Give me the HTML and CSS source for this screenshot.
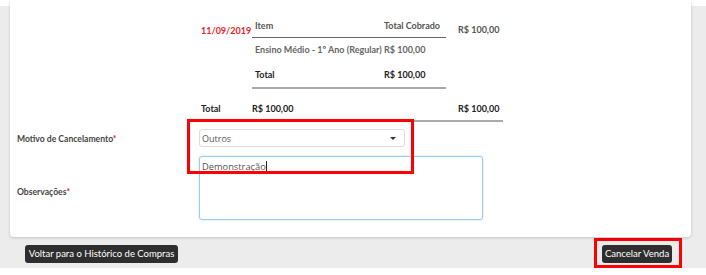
FILE: index.html
```html
<!DOCTYPE html>
<html lang="pt-BR">
<head>
<meta charset="utf-8">
<title>Cancelar Venda</title>
<link rel="stylesheet" href="styles.css">
</head>
<body>
<div class="page">
  <div class="card">
    <div class="summary">
      <table class="outer">
        <tr>
          <td class="date">11/09/2019</td>
          <td class="inner-cell">
            <table class="inner">
              <tr class="head">
                <td class="c-item">Item</td>
                <td class="c-val">Total Cobrado</td>
              </tr>
              <tr class="body">
                <td class="c-item">Ensino Médio - 1º Ano (Regular)</td>
                <td class="c-val">R$ 100,00</td>
              </tr>
              <tr class="tot">
                <td class="c-item">Total</td>
                <td class="c-val">R$ 100,00</td>
              </tr>
            </table>
          </td>
          <td class="amount">R$ 100,00</td>
        </tr>
        <tr class="grand">
          <td class="g-label">Total</td>
          <td class="g-val">R$ 100,00</td>
          <td class="g-amount">R$ 100,00</td>
        </tr>
      </table>
    </div>

    <label class="label label-motivo">Motivo de Cancelamento<span class="req">*</span></label>
    <div class="select">
      <span>Outros</span>
      <svg class="caret" width="6" height="3" viewBox="0 0 6 3"><path d="M0 0h6L3 3z" fill="#333"/></svg>
    </div>

    <label class="label label-obs">Observações<span class="req">*</span></label>
    <div class="textarea">Demonstração<span class="cursor"></span></div>

    <div class="mark mark-form"></div>
  </div>

  <div class="footer">
    <button class="btn btn-back">Voltar para o Histórico de Compras</button>
    <div class="mark-btn">
      <button class="btn">Cancelar Venda</button>
    </div>
  </div>
</div>
</body>
</html>
```
FILE: styles.css
```css
* { box-sizing: border-box; }

html, body {
  margin: 0;
  background: #ffffff;
}

body {
  font-family: Lato, "Open Sans", sans-serif;
  font-size: 9px;
  color: #444;
}

.page {
  display: flow-root;
  margin-top: 6px;
  height: 262px;
  background: #ececec;
  padding: 0 15px 0 10px;
}

.card {
  position: relative;
  margin-top: -6px;
  background: #fff;
  border-radius: 0 0 4px 4px;
  box-shadow: 0 1px 3px rgba(0,0,0,0.18);
  padding: 13px 0 17px 7px;
  display: grid;
  grid-template-columns: 182px 1fr;
  row-gap: 9px;
}

.summary {
  grid-column: 2;
  margin-bottom: -2px;
}

table {
  border-collapse: collapse;
  border-spacing: 0;
}

.outer { width: 304px; table-layout: fixed; }

.outer td {
  vertical-align: top;
  padding: 0;
  line-height: 12px;
  font-weight: 700;
  white-space: nowrap;
}

.date {
  width: 53px;
  color: #ee1c24;
  padding: 12px 0 0 2px !important;
}

.inner-cell { width: 194px; padding-bottom: 8px !important; }

.amount {
  width: 57px;
  color: #555;
  padding: 11px 0 0 12px !important;
}

.inner { width: 194px; table-layout: fixed; }

.inner td {
  line-height: 12px;
  font-weight: 700;
  white-space: nowrap;
}

.inner .c-item { width: 129px; padding-left: 3px; }
.inner .c-val { width: 65px; padding-left: 3px; }

.inner .head td {
  padding-top: 7px;
  padding-bottom: 5px;
  color: #555;
  border-bottom: 1px solid #666;
}

.inner .body td {
  padding-top: 6px;
  padding-bottom: 6px;
  color: #666;
}

.inner .tot td {
  padding-top: 7px;
  padding-bottom: 6px;
  color: #222;
  border-bottom: 2px solid #aaa;
}

.grand td {
  padding-top: 6px !important;
  padding-bottom: 5px !important;
  color: #222;
  border-bottom: 2px solid #aaa;
}

.g-label { padding-left: 2px !important; }
.g-amount { padding-left: 12px !important; }

.label {
  grid-column: 1;
  font-weight: 700;
  font-size: 8.6px;
  color: #444;
  line-height: 12px;
}

.label-motivo { align-self: center; padding-top: 2px; }
.label-obs { padding-top: 30px; }

.req { color: #e22; }

.select {
  grid-column: 2;
  width: 206px;
  height: 18px;
  border: 1px solid #ddd;
  border-radius: 3px;
  display: flex;
  align-items: center;
  justify-content: space-between;
  padding: 0 8px 0 2px;
  font-family: "Open Sans", sans-serif;
  font-size: 9px;
  color: #555;
}

.caret { display: block; }

.textarea {
  grid-column: 2;
  width: 284px;
  height: 64px;
  border: 1px solid #9ecaed;
  border-radius: 3px;
  box-shadow: 0 0 2px rgba(110,170,230,0.5);
  padding: 3px 2px;
  font-family: "Open Sans", sans-serif;
  font-size: 9.3px;
  line-height: 14px;
  color: #555;
}

.cursor {
  display: inline-block;
  width: 1px;
  height: 11px;
  background: #222;
  vertical-align: -2px;
}

.mark {
  position: absolute;
  border: 3px solid #ff0000;
}

.mark-form {
  left: 177px;
  top: 119px;
  width: 227px;
  height: 55px;
}

.footer {
  display: flex;
  justify-content: space-between;
  align-items: flex-end;
  padding: 1px 9px 0 15px;
}

.btn {
  font-family: Lato, "Open Sans", sans-serif;
  font-size: 9.5px;
  color: #fff;
  background: #2e2e2e;
  border: none;
  border-radius: 3px;
  height: 18px;
  padding: 0 2px;
  line-height: 18px;
  white-space: nowrap;
  text-align: center;
}

.btn-back { margin-bottom: 5px; width: 153px; }

.mark-btn {
  border: 3px solid #ff0000;
  height: 30px;
  padding: 4px 7px 0 5px;
}

.mark-btn .btn { width: 70px; }
```
